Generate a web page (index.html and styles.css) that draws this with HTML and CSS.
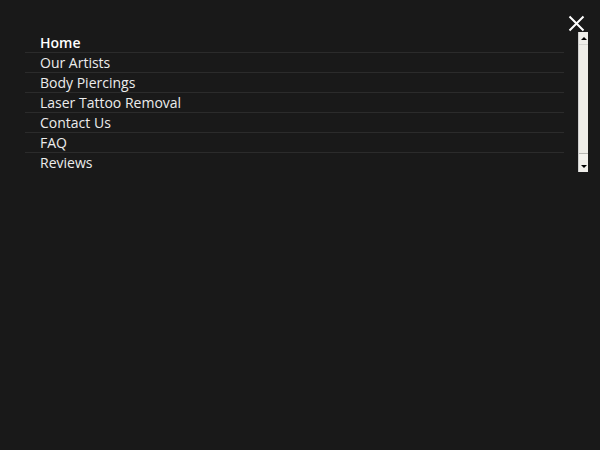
FILE: index.html
```html
<!DOCTYPE html>
<html lang="en">
<head>
  <meta charset="UTF-8">
  <title>Menu</title>
  <link rel="stylesheet" href="styles.css">
</head>
<body>
  <div class="overlay">
    <div class="top">
      <button class="close" aria-label="Close">
        <svg width="17" height="17" viewBox="0 0 17 17"><path d="M1.5 1.5L15.5 15.5M15.5 1.5L1.5 15.5" stroke="#fff" stroke-width="2" fill="none"/></svg>
      </button>
    </div>
    <div class="menu-wrap">
      <ul class="menu">
        <li class="active"><a href="#">Home</a></li>
        <li><a href="#">Our Artists</a></li>
        <li><a href="#">Body Piercings</a></li>
        <li><a href="#">Laser Tattoo Removal</a></li>
        <li><a href="#">Contact Us</a></li>
        <li><a href="#">FAQ</a></li>
        <li><a href="#">Reviews</a></li>
      </ul>
      <div class="scrollbar">
        <div class="sb-btn"><span class="arrow up"></span></div>
        <div class="sb-thumb"></div>
        <div class="sb-track"></div>
        <div class="sb-btn"><span class="arrow down"></span></div>
      </div>
    </div>
  </div>
</body>
</html>
```
FILE: styles.css
```css
body {
  margin: 0;
  background-color: #191919;
  font-family: "Open Sans", Arial, sans-serif;
  height: 450px;
}

.overlay {
  padding: 0 12px 0 25px;
}

.top {
  display: flex;
  justify-content: flex-end;
  height: 32px;
  padding-top: 15px;
  box-sizing: border-box;
}

.close {
  background: none;
  border: none;
  padding: 0;
  width: 17px;
  height: 17px;
  margin-right: 3px;
  cursor: pointer;
}

.menu-wrap {
  display: flex;
  gap: 14px;
}

.menu {
  list-style: none;
  margin: 1px 0 0;
  padding: 0;
  flex: 1;
}

.menu li {
  height: 20px;
  border-bottom: 1px solid #2b2b2b;
  box-sizing: border-box;
}

.menu li:last-child {
  border-bottom: none;
}

.menu a {
  display: block;
  padding-left: 15px;
  line-height: 20px;
  color: #ececec;
  font-size: 14px;
  text-decoration: none;
}

.menu .active a {
  font-weight: 600;
  color: #fff;
}

.scrollbar {
  width: 9px;
  height: 140px;
  display: flex;
  flex-direction: column;
  background-color: #f1f0ec;
  border-left: 1px solid #cfcfcf;
}

.sb-btn {
  height: 12px;
  display: flex;
  align-items: center;
  justify-content: center;
  background-color: #efeeea;
}

.sb-thumb {
  height: 108px;
  background-color: #eeede8;
  border-top: 1px solid #d6d6d2;
  border-bottom: 1px solid #b8b8b4;
}

.sb-track {
  flex: 1;
  background-color: #f4f3ef;
}

.arrow {
  width: 0;
  height: 0;
  border-left: 3px solid transparent;
  border-right: 3px solid transparent;
}

.arrow.up {
  border-bottom: 3px solid #000;
}

.arrow.down {
  border-top: 3px solid #000;
}
```
